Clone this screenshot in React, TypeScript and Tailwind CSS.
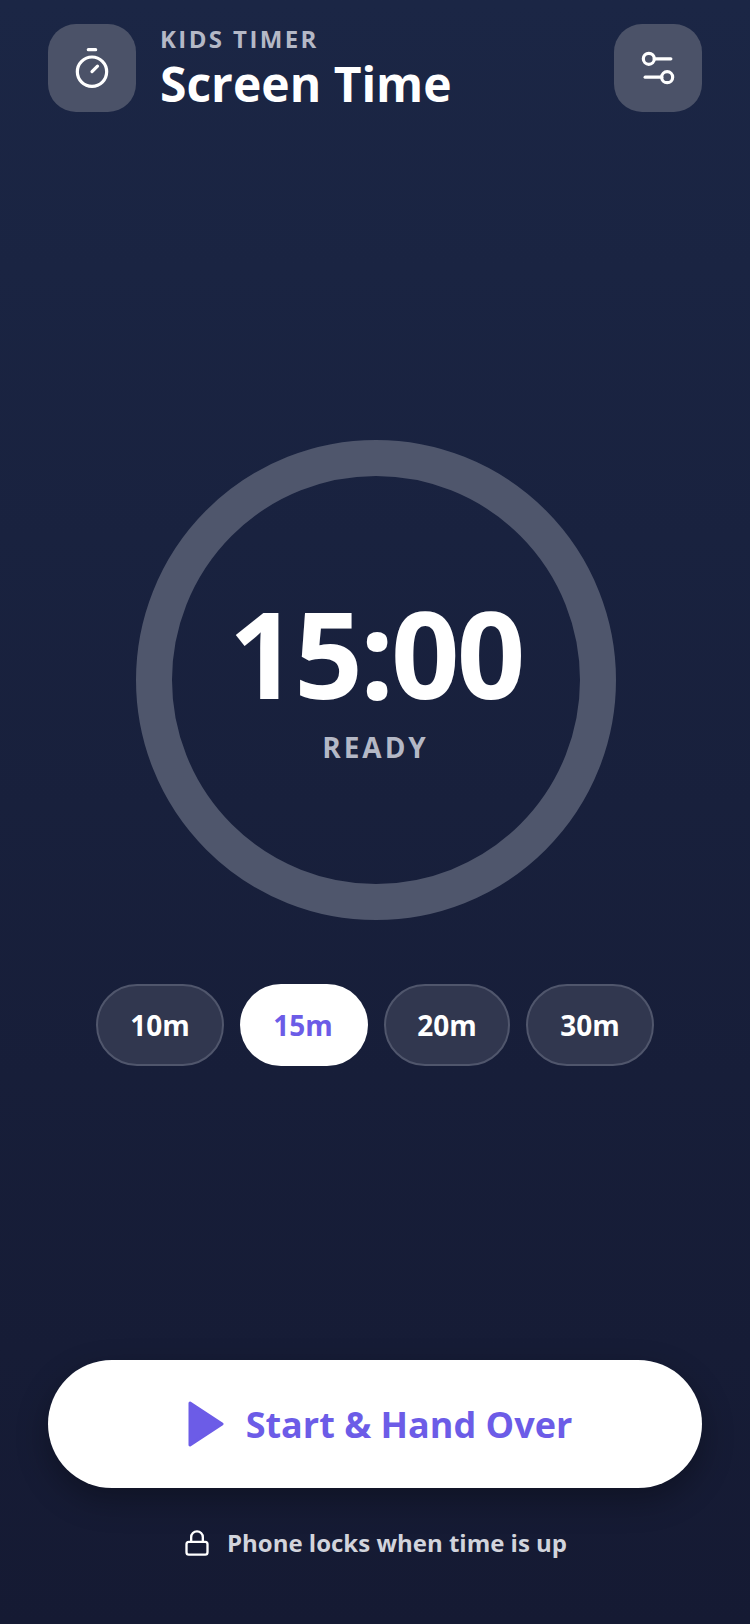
import { Lock, Settings2, Timer } from "lucide-react";

const chips = [
  { label: "10m", width: "w-[128px]" },
  { label: "15m", width: "w-[128px]" },
  { label: "20m", width: "w-[126px]" },
  { label: "30m", width: "w-[128px]" },
];
const selected = "15m";

export default function App() {
  return (
    <div className="h-[1624px] w-[750px] flex flex-col px-12 bg-gradient-to-b from-[#1b2645] to-[#151a33] font-['Open_Sans',sans-serif] text-white overflow-hidden">
      {/* Header */}
      <header className="mt-6 h-[88px] flex items-center justify-between">
        <div className="flex items-center gap-6">
          <div className="w-[88px] h-[88px] rounded-[28px] bg-[#4b5268] flex items-center justify-center">
            <Timer size={44} strokeWidth={1.75} />
          </div>
          <div className="self-start flex flex-col">
            <span className="text-2xl leading-[30px] font-bold tracking-[2.4px] text-[#b4b8c6]">KIDS TIMER</span>
            <span className="-mb-[2px] text-[48px] leading-[60px] font-bold">Screen Time</span>
          </div>
        </div>
        <div className="w-[88px] h-[88px] rounded-[28px] bg-[#4b5268] flex items-center justify-center">
          <Settings2 size={44} strokeWidth={1.75} />
        </div>
      </header>

      {/* Ring */}
      <div className="mt-[328px] ml-px self-center w-[480px] h-[480px] rounded-full border-[36px] border-[#4f566c] flex flex-col items-center justify-center">
        <span className="text-[120px] leading-[150px] font-bold tracking-[-3px] -mt-[18px]">15:00</span>
        <span className="mt-[1px] text-[28px] leading-9 font-bold tracking-[3px] text-[#b4b8c6]">READY</span>
      </div>

      {/* Presets */}
      <div className="mt-16 flex justify-center gap-4">
        {chips.map((c) =>
          c.label === selected ? (
            <button key={c.label} className={`${c.width} h-[82px] pr-[2px] rounded-full bg-white text-[#6c5ce7] text-[28px] font-bold`}>
              {c.label}
            </button>
          ) : (
            <button key={c.label} className={`${c.width} h-[82px] rounded-full border-2 border-[#50566c] bg-[#31374f] text-[28px] font-bold`}>
              {c.label}
            </button>
          )
        )}
      </div>

      {/* Start */}
      <button className="mt-auto h-32 pl-[10px] rounded-full bg-white shadow-[0_12px_32px_rgba(0,0,0,0.3)] flex items-center justify-center gap-[22px] text-[#6c5ce7] text-[36px] font-bold">
        <svg width="36" height="46" viewBox="0 0 36 46" fill="#6c5ce7" stroke="#6c5ce7" strokeWidth="3" strokeLinejoin="round">
          <path d="M2 2 L34 23 L2 44 Z" />
        </svg>
        <span className="pt-[2px]">Start &amp; Hand Over</span>
      </button>

      <div className="mt-[37px] mb-[63px] flex items-center justify-center gap-[16px] text-2xl leading-9 font-bold text-[#d2d4dc]">
        <Lock size={28} strokeWidth={2} className="text-white" />
        Phone locks when time is up
      </div>
    </div>
  );
}
